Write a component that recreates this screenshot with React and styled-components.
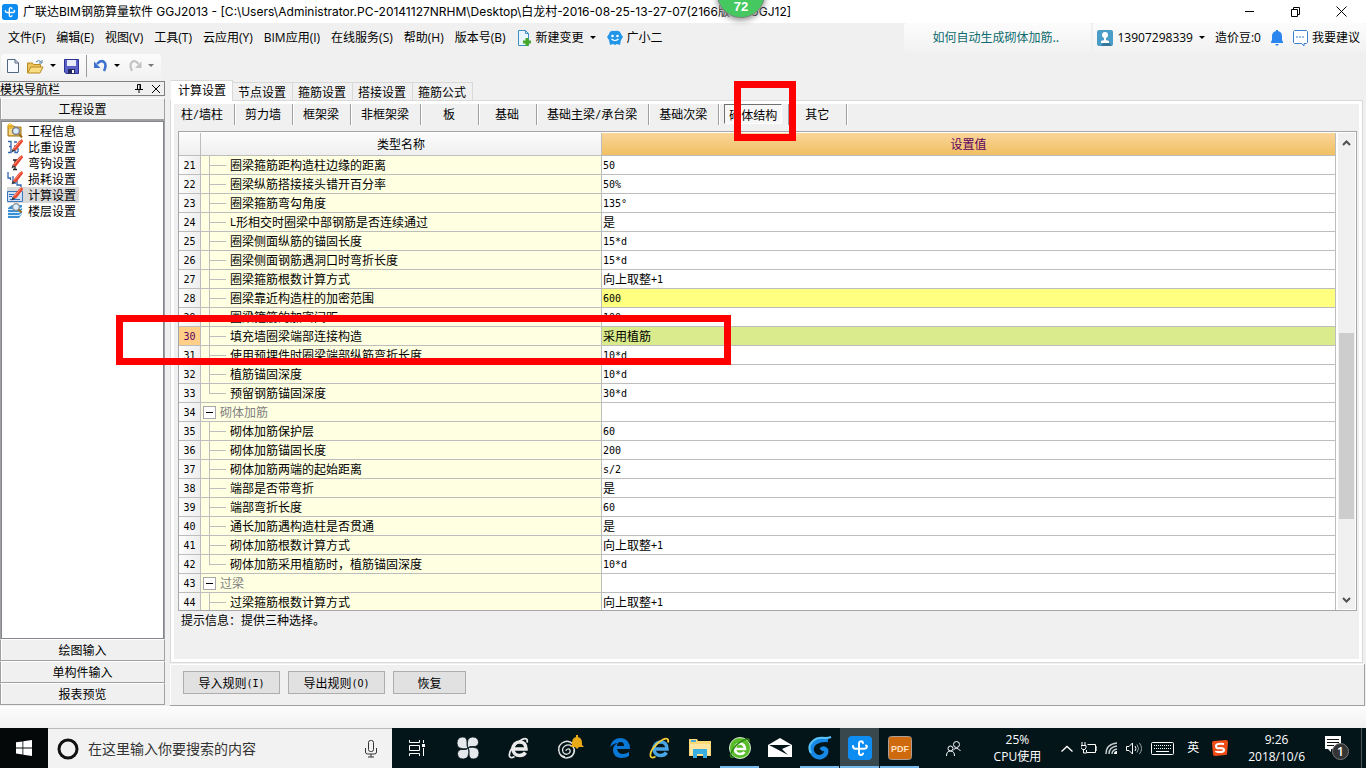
import React, { useState } from 'react'
import styled, { createGlobalStyle, css } from 'styled-components'

const menus = ['文件(F)', '编辑(E)', '视图(V)', '工具(T)', '云应用(Y)', 'BIM应用(I)', '在线服务(S)', '帮助(H)', '版本号(B)']

const modules = [
  { name: '工程信息', icon: 'info' },
  { name: '比重设置', icon: 'weight' },
  { name: '弯钩设置', icon: 'hook' },
  { name: '损耗设置', icon: 'loss' },
  { name: '计算设置', icon: 'calc' },
  { name: '楼层设置', icon: 'floor' },
]

const tabs = ['计算设置', '节点设置', '箍筋设置', '搭接设置', '箍筋公式']

const parts = ['柱/墙柱', '剪力墙', '框架梁', '非框架梁', '板', '基础', '基础主梁/承台梁', '基础次梁', '砌体结构', '其它']

const rows = [
  { no: 21, name: '圈梁箍筋距构造柱边缘的距离', value: '50' },
  { no: 22, name: '圈梁纵筋搭接接头错开百分率', value: '50%' },
  { no: 23, name: '圈梁箍筋弯勾角度', value: '135°' },
  { no: 24, name: 'L形相交时圈梁中部钢筋是否连续通过', value: '是' },
  { no: 25, name: '圈梁侧面纵筋的锚固长度', value: '15*d' },
  { no: 26, name: '圈梁侧面钢筋遇洞口时弯折长度', value: '15*d' },
  { no: 27, name: '圈梁箍筋根数计算方式', value: '向上取整+1' },
  { no: 28, name: '圈梁靠近构造柱的加密范围', value: '600', color: '#ffff80' },
  { no: 29, name: '圈梁箍筋的加密间距', value: '100' },
  { no: 30, name: '填充墙圈梁端部连接构造', value: '采用植筋', color: '#d9eb8c', current: true },
  { no: 31, name: '使用预埋件时圈梁端部纵筋弯折长度', value: '10*d' },
  { no: 32, name: '植筋锚固深度', value: '10*d' },
  { no: 33, name: '预留钢筋锚固深度', value: '30*d', last: true },
  { no: 34, name: '砌体加筋', value: '', group: true },
  { no: 35, name: '砌体加筋保护层', value: '60' },
  { no: 36, name: '砌体加筋锚固长度', value: '200' },
  { no: 37, name: '砌体加筋两端的起始距离', value: 's/2' },
  { no: 38, name: '端部是否带弯折', value: '是' },
  { no: 39, name: '端部弯折长度', value: '60' },
  { no: 40, name: '通长加筋遇构造柱是否贯通', value: '是' },
  { no: 41, name: '砌体加筋根数计算方式', value: '向上取整+1' },
  { no: 42, name: '砌体加筋采用植筋时，植筋锚固深度', value: '10*d', last: true },
  { no: 43, name: '过梁', value: '', group: true },
  { no: 44, name: '过梁箍筋根数计算方式', value: '向上取整+1' },
]

// the latin part of a label is set in a narrow fixed width face
function Label({ text }) {
  return text.split(/([\x20-\x7e°]+)/).map((part, i) => (
    i % 2 ? <Latin key={i}>{part}</Latin> : part
  ))
}

function Pencil() {
  return (
    <>
      <path d="M5.500 10 12 2l3-2 1 2.500-7 9z" fill="#e8432c" />
      <path d="M7 9.500 14 1.500" stroke="#ff9a7c" strokeWidth="1" />
      <path d="M5.500 10 4.500 13.500l4-2z" fill="#3a3a3a" />
    </>
  )
}

function ModuleIcon({ type }) {
  return (
    <svg width="16" height="16" viewBox="0 0 16 16" fill="none">
      {type === 'info' && (
        <>
          <path d="M1 3h6l1 1h6v9H1z" fill="#e9bd50" stroke="#a07418" />
          <path d="M2 6h11v6H2z" fill="#f9dc8b" />
          <path d="M3 0v6M0 3h6M1 1l4 4M5 1 1 5" stroke="#f0b21c" />
          <circle cx="9" cy="8" r="3.500" fill="#d9ecfb" stroke="#7a7f8a" strokeWidth="1.500" />
          <path d="m12 11 3 3.500" stroke="#9a6b1a" strokeWidth="2" />
        </>
      )}
      {type === 'weight' && (
        <>
          <path d="M1 2.500h3v5H2M4 7v6.500H1M7 3h3M8 6v7.500h3M11 9v4" stroke="#3468b0" strokeWidth="1.300" />
          <Pencil />
        </>
      )}
      {type === 'hook' && (
        <>
          <path d="M6 5h4M8 5v9M6 14.500h4" stroke="#222" strokeWidth="1.300" />
          <Pencil />
        </>
      )}
      {type === 'loss' && (
        <>
          <path d="M1 1v6h2.500v2M6 5v7h3M10 9v5h4v2" stroke="#3468b0" strokeWidth="1.300" />
          <Pencil />
        </>
      )}
      {type === 'calc' && (
        <>
          <path d="M.5 4.500h15v10H.5z" fill="#cfe1f7" stroke="#3b74b8" />
          <path d="M2 7.500h5M2 9.500h3M3 12.500h10" stroke="#2d6cc0" />
          <Pencil />
        </>
      )}
      {type === 'floor' && (
        <>
          <path d="m1 5 4-3h10v9l-3 4H1z" fill="#3c8fd2" />
          <path d="M1 6.500h11l3-2M1 9.500h11l3-2M1 12.500h11l3-2" stroke="#d7efff" strokeWidth="1.200" />
          <circle cx="9" cy="4" r="3.300" fill="#dceefa" stroke="#8b9098" strokeWidth="1.200" />
          <path d="m11.500 6.500 3 3" stroke="#9a6b1a" strokeWidth="2" />
        </>
      )}
    </svg>
  )
}

function AppLogo({ size }) {
  return (
    <svg width={size} height={size} viewBox="0 0 24 24" fill="none">
      <rect width="24" height="24" rx="4" fill="#0d8df2" />
      <path d="M15 7c-.5-2.500-4-2-4 .5V17c0 2.500 3.500 2.500 4 .5M5 10c0 2 .8 2.700 2.500 2.700h9c2.800 0 3-2.700 1.500-3.200" stroke="#fff" strokeWidth="2" strokeLinecap="round" />
    </svg>
  )
}

function Caret({ color = '#000' }) {
  return <svg width="6" height="4" viewBox="0 0 6 4"><path d="M0 0h6L3 3z" fill={color} /></svg>
}

function Browser({ color, ring }) {
  return (
    <svg width="24" height="24" viewBox="0 0 24 24" fill="none">
      <path d="M6 13h13c0-4.500-2.600-7-6.300-7C8.800 6 6 9 6 13c0 3.800 2.800 6.500 6.700 6.500 2.600 0 4.500-1 5.700-3" stroke={color} strokeWidth="3.500" />
      <path d="M20 6.500c1-3.500-1-5-5-3C8 7 1.500 15 2.500 20c.5 2 2.500 2 5 .5" stroke={ring} strokeWidth="1.800" />
    </svg>
  )
}

function TitleBar() {
  return (
    <Title>
      <AppLogo size={16} />
      <TitleText>广联达BIM钢筋算量软件 GGJ2013 - [C:\Users\Administrator.PC-20141127NRHM\Desktop\白龙村-2016-08-25-13-27-07(2166版本).GGJ12]</TitleText>
      <WindowButton aria-label="最小化">
        <svg width="11" height="11" viewBox="0 0 11 11"><path d="M1 5.500h9" stroke="#000" /></svg>
      </WindowButton>
      <WindowButton aria-label="还原">
        <svg width="11" height="11" viewBox="0 0 11 11" fill="none"><path d="M1.500 3.500h6v7h-6zM3.500 3V1.500h6v7H8" stroke="#000" /></svg>
      </WindowButton>
      <WindowButton aria-label="关闭">
        <svg width="11" height="11" viewBox="0 0 11 11"><path d="m.5.5 10 10M10.500.5l-10 10" stroke="#000" /></svg>
      </WindowButton>
      <SpeedBall>72</SpeedBall>
    </Title>
  )
}

function MenuBar() {
  return (
    <Menu>
      {menus.map((m) => <MenuButton key={m}>{m}</MenuButton>)}
      <MenuButton>
        <svg width="15" height="16" viewBox="0 0 15 16" fill="none">
          <path d="M1.500.5h7l3 3v12h-10z" fill="#eaf6ff" stroke="#3f8ec4" />
          <path d="M8.500.5v3h3" stroke="#3f8ec4" />
          <path d="M8.500 8h3v2.500H14v3h-2.500V16h-3v-2.500H6v-3h2.500z" fill="#45a828" />
        </svg>
        新建变更
        <CaretSpace><Caret /></CaretSpace>
      </MenuButton>
      <MenuButton>
        <svg width="16" height="16" viewBox="0 0 16 16" fill="none">
          <path d="M2 4Q3 0 8 1q5-1 6 3l2 3-2 3-1 5-3-1-2 1-2-1-3 1-1-5-2-3z" fill="#2196e8" />
          <circle cx="5.500" cy="6" r="1.300" fill="#fff" />
          <circle cx="10.500" cy="6" r="1.300" fill="#fff" />
          <path d="M4.500 9q3.500 3 7 0" stroke="#fff" strokeWidth="1.200" />
        </svg>
        广小二
      </MenuButton>
      <Spring />
      <Tip href="#tip">如何自动生成砌体加筋..</Tip>
      <Account>
        <MenuButton>
          <svg width="16" height="16" viewBox="0 0 16 16">
            <rect width="16" height="16" rx="2" fill="#4a9cc9" />
            <path d="m9 9 6 7H4z" fill="#367899" />
            <circle cx="8" cy="5" r="3" fill="#fff" />
            <path d="M4 13v-2l3-1V8h2v2l3 1v2z" fill="#fff" />
          </svg>
          13907298339
          <CaretSpace><Caret /></CaretSpace>
        </MenuButton>
        <span>造价豆:0</span>
        <svg width="12" height="16" viewBox="0 0 12 16">
          <path d="M5 0h2v1q4 1 4 5v4l1 2v1H0v-1l1-2V6q0-4 4-5zM4 14h4l-2 2z" fill="#2a86ee" />
        </svg>
        <MenuButton>
          <svg width="15" height="16" viewBox="0 0 15 16" fill="none">
            <path d="M1.500.5h12l1 1v11l-1 1H11V16l-2.500-2.500h-7l-1-1v-11z" fill="#fff" stroke="#3a7fd0" />
            <path d="M3 7h2m1 0h2m1 0h2" stroke="#3a7fd0" />
          </svg>
          我要建议
        </MenuButton>
      </Account>
    </Menu>
  )
}

function ToolBar() {
  return (
    <ToolRow>
      <Tools>
        <ToolButton aria-label="新建">
          <svg width="12" height="14" viewBox="0 0 12 14"><path d="M.5.5H8l3.500 3.500v9.500H.5z" fill="#f8fbff" stroke="#51677f" /><path d="M8 .5V4h3.500" fill="none" stroke="#51677f" /></svg>
        </ToolButton>
        <ToolButton aria-label="打开">
          <svg width="17" height="15" viewBox="0 0 17 15"><path d="M.5 14V4h5l1 1.500h7V8" fill="#ecc35a" stroke="#b98a20" /><path d="M.5 14 4 8h12l-3 6z" fill="#f8dd82" stroke="#b98a20" /><path d="M9 3q3-3 5 0m1-2v3h-3" fill="none" stroke="#4d7da8" /></svg>
          <Caret />
        </ToolButton>
        <ToolButton aria-label="保存">
          <svg width="15" height="15" viewBox="0 0 15 15"><path d="M.5.5h14v14H2l-1.500-1.500z" fill="#5961c8" stroke="#2c3291" /><path d="M3 1h9v6H3z" fill="#e9edfb" /><path d="M4 10h7v4.500H4z" fill="#23275a" /><path d="M8 11h2v3H8z" fill="#fff" /></svg>
        </ToolButton>
        <ToolLine />
        <ToolButton aria-label="撤销">
          <svg width="14" height="14" viewBox="0 0 14 14" fill="none"><path d="M3 5Q7 .5 10 3t0 9" stroke="#3d72cf" strokeWidth="2.600" /><path d="M0 2.500V9h6.500z" fill="#3d72cf" /></svg>
          <Caret />
        </ToolButton>
        <ToolButton aria-label="重做">
          <svg width="14" height="14" viewBox="0 0 14 14" fill="none"><path d="M10.500 5Q7 .5 4 3t0 9" stroke="#c3c3c3" strokeWidth="2.200" /><path d="M13.500 2.500V9H7z" fill="#c3c3c3" /></svg>
          <Caret color="#777" />
        </ToolButton>
      </Tools>
    </ToolRow>
  )
}

function SideBar() {
  const [current, setCurrent] = useState('计算设置')
  return (
    <Side>
      <SideHead>
        <span>模块导航栏</span>
        <Spring />
        <SideTool aria-label="固定">
          <svg width="8" height="9" viewBox="0 0 8 9" fill="none"><path d="M2.500 5V.5h3V5M5 .5V5M0 5.500h8M4 6v3" stroke="#000" /></svg>
        </SideTool>
        <SideTool aria-label="关闭导航栏">
          <svg width="8" height="8" viewBox="0 0 8 8"><path d="m0 0 8 8M8 0 0 8" stroke="#000" /></svg>
        </SideTool>
      </SideHead>
      <GroupButton>工程设置</GroupButton>
      <Tree>
        {modules.map((m) => (
          <TreeItem key={m.name} $active={m.name === current} onClick={() => setCurrent(m.name)}>
            <ModuleIcon type={m.icon} />
            {m.name}
          </TreeItem>
        ))}
      </Tree>
      <GroupButton>绘图输入</GroupButton>
      <GroupButton>单构件输入</GroupButton>
      <GroupButton>报表预览</GroupButton>
    </Side>
  )
}

function SettingRow({ row }) {
  return (
    <tr>
      <NumberCell $current={row.current}><Latin>{row.no}</Latin></NumberCell>
      <NameCell>
        <NameLine>
          {row.group ? <Toggle aria-label="折叠"><svg width="7" height="1" viewBox="0 0 7 1"><path d="M0 .5h7" stroke="#000" /></svg></Toggle> : <Branch $last={row.last} />}
          <NameText $group={row.group}><Label text={row.name} /></NameText>
        </NameLine>
      </NameCell>
      <ValueCell $color={row.color}><Label text={row.value} /></ValueCell>
    </tr>
  )
}

function Settings() {
  const [tab, setTab] = useState('计算设置')
  const [part, setPart] = useState('砌体结构')
  return (
    <Content>
      <Tabs>
        {tabs.map((t) => <Tab key={t} $active={t === tab} onClick={() => setTab(t)}>{t}</Tab>)}
      </Tabs>
      <Panel>
        <Parts>
          {parts.map((p) => (
            <PartSlot key={p}>
              <Part $active={p === part} onClick={() => setPart(p)}><Label text={p} /></Part>
            </PartSlot>
          ))}
        </Parts>
        <GridBox>
          <GridView>
            <Grid>
              <colgroup>
                <NumberCol />
                <NameCol />
                <col />
              </colgroup>
              <thead>
                <tr>
                  <HeadCell />
                  <HeadCell>类型名称</HeadCell>
                  <HeadCell $gold>设置值</HeadCell>
                </tr>
              </thead>
              <tbody>
                {rows.map((r) => <SettingRow key={r.no} row={r} />)}
              </tbody>
            </Grid>
          </GridView>
          <Scroll>
            <svg width="9" height="6" viewBox="0 0 9 6" fill="none"><path d="m1 5 3.500-3.500L8 5" stroke="#505050" strokeWidth="2" /></svg>
            <Track><Thumb /></Track>
            <svg width="9" height="6" viewBox="0 0 9 6" fill="none"><path d="m1 1 3.500 3.500L8 1" stroke="#505050" strokeWidth="2" /></svg>
          </Scroll>
        </GridBox>
        <Hint>提示信息：提供三种选择。</Hint>
      </Panel>
      <Actions>
        <ActionButton><Label text="导入规则(I)" /></ActionButton>
        <ActionButton><Label text="导出规则(O)" /></ActionButton>
        <ActionButton $short>恢复</ActionButton>
      </Actions>
    </Content>
  )
}

function TaskBar() {
  return (
    <Task>
      <StartButton aria-label="开始">
        <svg width="16" height="16" viewBox="0 0 16 16" fill="#fff"><path d="M0 2.300 6.500 1.400v6.100H0zM7.300 1.300 16 0v7.500H7.300zM0 8.400h6.500v6.100L0 13.600zM7.300 8.400H16V16l-8.700-1.300z" /></svg>
      </StartButton>
      <Search>
        <svg width="22" height="22" viewBox="0 0 22 22" fill="none"><circle cx="11" cy="11" r="9" stroke="#111" strokeWidth="3" /></svg>
        <SearchInput aria-label="搜索" placeholder="在这里输入你要搜索的内容" />
        <svg width="12" height="18" viewBox="0 0 12 18" fill="none"><rect x="3.500" y=".5" width="5" height="11" rx="2" stroke="#333" /><path d="M.5 8v4q0 2 2 2h7q2 0 2-2V8M6 14v3M3 17h6" stroke="#333" /></svg>
      </Search>
      <Pinned>
        <TaskButton $wide aria-label="任务视图">
          <svg width="18" height="16" viewBox="0 0 18 16" fill="none" stroke="#fff"><path d="M1.500 0v2.500h10V0M1.500 5.500h10v5h-10zM1.500 16v-2.500h10V16M15.500 0v3m0 5v8" /><path d="M14 4h3v3h-3z" fill="#fff" stroke="none" /></svg>
        </TaskButton>
        <TaskButton $wide aria-label="速记">
          <svg width="22" height="22" viewBox="0 0 22 22"><g fill="#e6e9ec" stroke="#04151a" strokeWidth=".8"><path d="M10.500 11Q9 0 15.500 0q6 0 6 5.500Q21 10 16 9.500q-4-.5-5.500 1.500z" /><path d="M11 10.500q11-1.500 11 5 0 6.500-5.500 6.500-4.500 0-4.500-5 .5-4-1-6.500z" /><path d="M11.500 11Q13 22 6.500 22 .5 22 .5 16.500 1 12 6 12.500q4 .5 5.500-1.500z" /><path d="M11 11.500Q0 13 0 6.500 0 0 5.500 0 10 0 10 5q-.5 4 1 6.500z" /></g></svg>
        </TaskButton>
        <TaskButton $wide aria-label="浏览器"><Browser color="#ebebeb" ring="#ebebeb" /></TaskButton>
        <TaskButton $wide aria-label="提醒">
          <svg width="30" height="28" viewBox="0 0 30 28" fill="none"><path d="M18 10Q13 5 7 9c-6 5-3 14 4 15 8 0 11-8 6-12-5-3-11 1-9 6 2 4 8 2 7-2-1-2-4-1-4 1M4 12q-2 9 6 11m9-8q1 8-8 9" stroke="#e4e4e4" strokeWidth="1.300" /><path d="M21 1h2v2q4 1 4 6v2l2 2H15l2-2V9q0-5 4-6z" fill="#e8aa16" /><path d="M20 13h4l-2 2z" fill="#e8aa16" /></svg>
        </TaskButton>
      </Pinned>
      <TaskButton aria-label="Edge">
        <svg width="22" height="22" viewBox="0 0 22 22" fill="#0a78d7"><path fillRule="evenodd" d="M1 10Q3 1 12 1q9 1 9 11H8q1 5 6 5 3 0 6-2v4q-3 2-8 2-8-1-8-8 0-5 5-7-4 0-8 4M8 9h7q0-4-3-4-4 0-4 4" /></svg>
      </TaskButton>
      <TaskButton aria-label="Internet Explorer"><Browser color="#49a4e4" ring="#f3cf38" /></TaskButton>
      <TaskButton aria-label="文件资源管理器">
        <svg width="22" height="20" viewBox="0 0 22 20"><path d="M0 1h8l1 2h13v15H0z" fill="#fbd976" /><path d="M2 2h5v2H2z" fill="#4aa9d6" /><path d="M1 6h20v11H1z" fill="#ffe6a0" /><path d="M4 20v-9h14v9h-4v-4H8v4z" fill="#39aee0" /></svg>
      </TaskButton>
      <TaskButton $running aria-label="360">
        <svg width="24" height="24" viewBox="0 0 24 24" fill="none"><circle cx="12" cy="12" r="10.500" fill="#58bd29" stroke="#d9ecd0" /><path d="M7 13h10c0-3-2-5.500-5-5.500S7 10 7 13s2 5 5 5c2 0 3.500-.5 4.500-2" stroke="#fff" strokeWidth="2.600" /><path d="M21 6q1-5-5-2Q7 8 3 17q-2 5 3 4" stroke="#2f8a12" strokeWidth="1.500" /></svg>
      </TaskButton>
      <TaskButton aria-label="邮件">
        <svg width="24" height="20" viewBox="0 0 24 20"><path d="M0 7 12 0l12 7v12H0z" fill="#fff" /><path d="M1 7h22l-9 4 6 6L1 7z" fill="#04151a" /></svg>
      </TaskButton>
      <TaskButton $running aria-label="广联达">
        <svg width="24" height="24" viewBox="0 0 24 24" fill="none"><path d="M20 4Q13 3 8 6q-6 4-4 10 3 6 9 5 6-2 5-7-2-3-5 0" stroke="#1689e6" strokeWidth="4.500" /><path d="M23 1q-2 1-6 1Q9 1 5 5-1 10 3 17" stroke="#5bc4fa" strokeWidth="2" /></svg>
      </TaskButton>
      <TaskButton $running $active aria-label="GGJ2013"><AppLogo size={24} /></TaskButton>
      <TaskButton $running aria-label="PDF">
        <svg width="24" height="24" viewBox="0 0 24 24"><rect x=".5" y=".5" width="23" height="23" rx="3" fill="#ce6a0d" stroke="#a9a19a" /><text x="12" y="16" textAnchor="middle" fontFamily="Liberation Sans, sans-serif" fontSize="9" fontWeight="bold" fill="#ffe0bd">PDF</text></svg>
      </TaskButton>
      <Spring />
      <Tray>
        <Contacts aria-label="人脉">
          <svg width="15" height="15" viewBox="0 0 15 15" fill="none" stroke="#fff"><circle cx="10.500" cy="3.500" r="3" /><circle cx="4.500" cy="7.500" r="2.500" /><path d="M.5 15q0-5 4-5t4 5M7.500 9q3-4 7 1" /></svg>
        </Contacts>
        <Meter><span>25%</span><span>CPU使用</span></Meter>
        <svg width="12" height="7" viewBox="0 0 12 7" fill="none"><path d="m.5 6.500 5.500-5 5.500 5" stroke="#fff" strokeWidth="1.300" /></svg>
        <svg width="16" height="12" viewBox="0 0 16 12" fill="none" stroke="#fff"><path d="M6.500 2.500h8v8h-9V8M15 5h1v3h-1M1 0v3m3-3v3M0 3.500h5v2l-1 2H1.500L0 5.500zM2.500 8v3h3" /></svg>
        <svg width="13" height="13" viewBox="0 0 13 13" fill="none"><path d="M1 12Q1 2 12 1M4 12q0-7 8-8M7 12q0-4 5-5" stroke="#c9cfd1" strokeWidth="1.400" /><path d="M9 12q0-3 3-3v3z" fill="#fff" /></svg>
        <svg width="17" height="13" viewBox="0 0 17 13" fill="none" stroke="#fff"><path d="M.5 4.500H3l3.500-3.500v11L3 8.500H.5zM9 4q2 2.500 0 5" /><path d="M11 2.500q3 4 0 8M13.500 1q4 5.500 0 11" stroke="#98a3a6" /></svg>
        <svg width="23" height="13" viewBox="0 0 23 13" fill="none" stroke="#fff"><rect x=".5" y=".5" width="22" height="12" rx="1" /><path d="M3 3.500h17M3 6.500h17" strokeDasharray="1 1" /><path d="M5 9.500h13" /></svg>
        <Language>英</Language>
        <svg width="16" height="16" viewBox="0 0 16 16" fill="none"><path d="M2 1 14 0q2 0 2 2l-1 12q0 1-2 1L3 16q-2 0-2-2L0 3q0-2 2-2" fill="#f04e16" /><path d="M12 4Q4 3 4 6t4 2q4 0 4 2t-4 2-4-1" stroke="#fff" strokeWidth="2.200" /></svg>
        <Meter><span>9:26</span><span>2018/10/6</span></Meter>
        <svg width="25" height="26" viewBox="0 0 25 26"><path d="M0 1h16v13H6v3l-3-3H0z" fill="#fff" /><path d="M2 4.500h12M2 7.500h12M2 10.500h7" stroke="#111" /><circle cx="15.500" cy="16.500" r="8" fill="#343434" stroke="#777" /><text x="15.500" y="21" textAnchor="middle" fontFamily="Open Sans, sans-serif" fontSize="12" fontWeight="600" fill="#fff">1</text></svg>
      </Tray>
    </Task>
  )
}

export default function App() {
  return (
    <Window>
      <GlobalStyle />
      <TitleBar />
      <MenuBar />
      <ToolBar />
      <Work>
        <SideBar />
        <Settings />
      </Work>
      <StatusBar />
      <TaskBar />
      <RowMark />
      <PartMark />
    </Window>
  )
}

const GlobalStyle = createGlobalStyle`
  *{
    box-sizing: border-box;
  }
  body{
    margin: 0;
    overflow: hidden;
    background: #f0f0f0;
    color: #000;
    font: 12px/16px "Noto Sans CJK SC", sans-serif;
  }
  button, input{
    font: inherit;
    color: inherit;
    border: 0;
    padding: 0;
    background: none;
    border-radius: 0;
  }
  svg{
    display: block;
    flex: none;
  }
`

const Window = styled.div`
  position: relative;
  height: 100vh;
  display: flex;
  flex-direction: column;
`
const Latin = styled.span`
  font-family: "DejaVu Sans Mono", monospace;
  font-size: 10px;
  line-height: 10px;
  vertical-align: 1px;
`
const Spring = styled.div`
  flex: 1;
`

const Title = styled.header`
  position: relative;
  display: flex;
  align-items: center;
  flex: none;
  height: 23px;
  padding-left: 2px;
  background: #fff;
`
const TitleText = styled.div`
  flex: 1;
  padding-left: 5px;
  font-family: Inter, "Noto Sans CJK SC", sans-serif;
  white-space: nowrap;
  overflow: hidden;
`
const WindowButton = styled.button`
  display: flex;
  align-items: center;
  justify-content: center;
  width: 46px;
  height: 22px;
  &:last-of-type{
    margin-right: 2px;
  }
`
const SpeedBall = styled.div`
  position: absolute;
  top: -30px;
  left: 717px;
  width: 48px;
  height: 48px;
  padding-top: 28px;
  border: 1px solid #7c8a80;
  border-radius: 50%;
  background: #45c860;
  box-shadow: 0 2px 6px #888;
  color: #fff;
  font-family: "Liberation Sans", sans-serif;
  font-size: 13px;
  font-weight: bold;
  text-align: center;
  z-index: 2;
`

const Menu = styled.nav`
  display: flex;
  align-items: center;
  flex: none;
  gap: 11px;
  height: 29px;
  padding-left: 8px;
  font-family: "Open Sans", "Noto Sans CJK SC", sans-serif;
`
const MenuButton = styled.button`
  display: flex;
  align-items: center;
  gap: 4px;
  white-space: nowrap;
`
const CaretSpace = styled.span`
  padding-left: 2px;
`
const Tip = styled.a`
  align-self: stretch;
  width: 187px;
  margin-right: -9px;
  padding: 6px 28px;
  border-radius: 3px;
  background: linear-gradient(#fcfcfc, #f2f2f2);
  color: #0d6b6f;
  font-family: "Noto Sans CJK SC", sans-serif;
  text-decoration: none;
  white-space: nowrap;
`
const Account = styled.div`
  display: flex;
  align-items: center;
  align-self: stretch;
  gap: 10px;
  padding: 0 6px 0 4px;
  border-radius: 3px;
  background: linear-gradient(#fcfcfc, #f2f2f2);
`

const ToolRow = styled.div`
  display: flex;
  flex: none;
  height: 28px;
  padding: 2px 1px;
`
const Tools = styled.div`
  display: flex;
  align-items: center;
  gap: 8px;
  width: 160px;
  padding-left: 6px;
  border-radius: 3px;
  background: linear-gradient(#fcfcfc, #f2f2f2);
`
const ToolButton = styled.button`
  display: flex;
  align-items: center;
  gap: 6px;
`
const ToolLine = styled.span`
  width: 1px;
  height: 22px;
  margin: 0 -1px;
  background: #999;
`

const Work = styled.main`
  display: flex;
  flex: 1;
  gap: 5px;
  min-height: 0;
`
const Side = styled.aside`
  display: flex;
  flex-direction: column;
  width: 165px;
  padding: 1px 0;
`
const SideHead = styled.div`
  display: flex;
  align-items: center;
  flex: none;
  height: 15px;
  margin-bottom: 2px;
  border: 1px solid #808080;
  border-left: 0;
`
const SideTool = styled.button`
  display: flex;
  align-items: center;
  justify-content: center;
  width: 17px;
`
const GroupButton = styled.button`
  flex: none;
  height: 22px;
  border: 1px solid #a0a0a0;
  border-top-color: #fff;
  box-shadow: inset 1px 0 #fff;
  text-align: center;
`
const Tree = styled.div`
  flex: 1;
  min-height: 0;
  margin: 1px 1px 0;
  padding: 1px 5px;
  border: 1px solid #828790;
  outline: 1px solid #a0a0a0;
  background: #fff;
`
const TreeItem = styled.button`
  display: flex;
  align-items: center;
  gap: 5px;
  height: 16px;
  padding-right: 3px;
  background: ${(p) => (p.$active ? '#d9d9d9' : 'none')};
`

const Content = styled.section`
  display: flex;
  flex-direction: column;
  flex: 1;
  min-width: 0;
  padding-right: 1px;
`
const Tabs = styled.div`
  display: flex;
  align-items: flex-end;
  flex: none;
  height: 20px;
  padding-left: 1px;
`
const Tab = styled.button`
  height: 18px;
  padding: 0 6px 0 5px;
  border: 1px solid #d9d9d9;
  border-width: 1px 1px 0 0;
  ${(p) => p.$active && css`
    height: 21px;
    margin-bottom: -1px;
    padding: 0 6px 2px 7px;
    background: #fff;
    z-index: 1;
  `}
`
const Panel = styled.div`
  display: flex;
  flex-direction: column;
  flex: 1;
  min-height: 0;
  margin-right: 2px;
  border: 1px solid #d9d9d9;
  box-shadow: inset 0 0 0 3px #fff;
  padding: 3px 5px 0 0;
`
const Parts = styled.div`
  display: flex;
  flex: none;
  height: 27px;
`
const PartSlot = styled.div`
  display: flex;
  justify-content: center;
  align-items: flex-start;
  height: 21px;
  min-width: 58px;
  border-right: 1px solid #a0a0a0;
  box-shadow: 1px 0 #fff;
`
const Part = styled.button`
  height: 20px;
  margin: 0 6px 0 5px;
  padding: 0 5px;
  white-space: nowrap;
  ${(p) => p.$active && css`
    padding: 1px 4px 0;
    border: 1px solid;
    border-color: #707070 #fff #fff #707070;
    background: #f7f7f7;
  `}
`
const GridBox = styled.div`
  display: flex;
  flex: 1;
  min-height: 0;
  margin-left: 7px;
  border: 1px solid #a7a6ab;
  background: #fff;
`
const GridView = styled.div`
  flex: 1;
  min-width: 0;
  overflow: hidden;
  padding-top: 1px;
`
const Grid = styled.table`
  width: 100%;
  table-layout: fixed;
  border-collapse: separate;
  border-spacing: 0;
`
const NumberCol = styled.col`
  width: 22px;
`
const NameCol = styled.col`
  width: 401px;
`
const HeadCell = styled.th`
  height: 23px;
  padding: 0;
  border: 1px solid #bdbdbd;
  border-width: 0 1px 1px 0;
  background: ${(p) => (p.$gold ? 'linear-gradient(#fad59a, #f0bf62)' : 'linear-gradient(#fcfcfc, #efefef)')};
  color: ${(p) => (p.$gold ? '#5e0060' : '#000')};
  font-weight: normal;
`
const cell = css`
  height: 19px;
  padding: 0;
  border: 1px solid #bdbdbd;
  border-width: 0 1px 1px 0;
  white-space: nowrap;
`
const NumberCell = styled.td`
  ${cell}
  text-align: center;
  background: ${(p) => (p.$current ? '#ffcf87' : 'linear-gradient(90deg, #fdfdfd, #eee)')};
  color: ${(p) => (p.$current ? '#5e0060' : '#000')};
`
const NameCell = styled.td`
  ${cell}
  background: #ffffe1;
`
const ValueCell = styled.td`
  ${cell}
  padding-left: 1px;
  background: ${(p) => p.$color || '#fff'};
`
const NameLine = styled.div`
  display: flex;
  align-items: center;
  height: 18px;
`
const Branch = styled.span`
  width: 17px;
  height: 18px;
  margin: 0 4px 0 8px;
  &::before, &::after{
    content: '';
    display: block;
    height: 9px;
    border-left: 1px solid #bdbdbd;
  }
  &::before{
    border-bottom: 1px solid #bdbdbd;
  }
  &::after{
    border-left-width: ${(p) => (p.$last ? 0 : '1px')};
  }
`
const Toggle = styled.button`
  display: flex;
  align-items: center;
  justify-content: center;
  width: 13px;
  height: 13px;
  margin: 0 4px 0 2px;
  border: 1px solid #a8a8a8;
  background: #fff;
`
const NameText = styled.span`
  color: ${(p) => (p.$group ? '#808080' : '#000')};
`
const Scroll = styled.div`
  display: flex;
  flex-direction: column;
  align-items: center;
  width: 17px;
  margin: 1px 1px 1px 2px;
  padding: 7px 0 6px;
  background: #f0f0f0;
`
const Track = styled.div`
  display: flex;
  flex-direction: column;
  flex: 1;
  width: 15px;
  padding: 187px 0 78px;
`
const Thumb = styled.div`
  flex: 1;
  background: #cdcdcd;
`
const Hint = styled.div`
  flex: none;
  height: 51px;
  padding: 1px 10px;
`
const Actions = styled.div`
  display: flex;
  flex: none;
  gap: 8px;
  height: 42px;
  margin-top: 1px;
  padding: 7px 13px;
  border: 1px solid #a0a0a0;
  border-width: 0 1px 1px 0;
  box-shadow: inset 1px 1px #fff;
`
const ActionButton = styled.button`
  width: ${(p) => (p.$short ? '73px' : '97px')};
  height: 23px;
  border: 1px solid #adadad;
  background: #e1e1e1;
`
const StatusBar = styled.footer`
  flex: none;
  height: 22px;
  background: linear-gradient(#fdfdfd, #f1f1f1);
`

const Task = styled.div`
  display: flex;
  flex: none;
  height: 40px;
  background: #04151a;
  color: #fff;
  font-family: "Open Sans", "Noto Sans CJK SC", sans-serif;
`
const StartButton = styled.button`
  display: flex;
  align-items: center;
  justify-content: center;
  width: 48px;
  background: #050808;
`
const Search = styled.label`
  display: flex;
  align-items: center;
  gap: 9px;
  width: 344px;
  padding: 0 15px 0 9px;
  border-top: 1px solid #b9b9b9;
  background: #f2f2f2;
  color: #333;
`
const SearchInput = styled.input`
  flex: 1;
  min-width: 0;
  font-size: 14px;
  line-height: 20px;
  outline: 0;
  &::placeholder{
    color: #333;
    opacity: 1;
  }
`
const Pinned = styled.div`
  display: flex;
  padding-right: 4px;
`
const TaskButton = styled.button`
  display: flex;
  align-items: center;
  justify-content: center;
  width: ${(p) => (p.$wide ? '50px' : '39px')};
  margin-right: 1px;
  border-bottom: 2px solid ${(p) => (p.$running ? '#76b9ed' : 'transparent')};
  border-top: 2px solid transparent;
  background-color: ${(p) => (p.$active ? '#39484d' : 'transparent')};
`
const Tray = styled.div`
  display: flex;
  align-items: center;
  gap: 8px;
  padding-right: 11px;
  border-right: 1px solid #4f5659;
  margin-right: 4px;
`
const Contacts = styled.button`
  padding-right: 13px;
`
const Language = styled.span`
  padding: 0 5px;
`
const Meter = styled.div`
  display: flex;
  flex-direction: column;
  align-items: center;
  padding: 0 12px;
  line-height: 17px;
`

// red frames drawn over the window
const Mark = styled.div`
  position: absolute;
  border: 7px solid #fe0000;
  pointer-events: none;
`
const RowMark = styled(Mark)`
  top: 315px;
  left: 116px;
  width: 615px;
  height: 50px;
`
const PartMark = styled(Mark)`
  top: 81px;
  left: 734px;
  width: 62px;
  height: 60px;
`
